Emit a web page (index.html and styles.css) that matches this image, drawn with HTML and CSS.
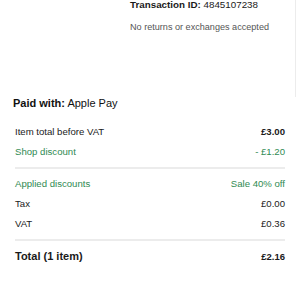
FILE: index.html
```html
<!DOCTYPE html>
<html lang="en">
<head>
  <meta charset="UTF-8" />
  <title>Order receipt</title>
  <link rel="stylesheet" href="styles.css">
</head>
<body>
  <div class="top">
    <div class="meta">
      <p class="txn"><strong>Transaction ID:</strong> 4845107238</p>
      <p class="note">No returns or exchanges accepted</p>
    </div>
  </div>

  <div class="summary">
    <h2 class="paid"><strong>Paid with:</strong> Apple Pay</h2>

    <div class="row"><span>Item total before VAT</span><strong>£3.00</strong></div>
    <div class="row green"><span>Shop discount</span><span>- £1.20</span></div>
    <hr class="rule">
    <div class="row green"><span>Applied discounts</span><span>Sale 40% off</span></div>
    <div class="row"><span>Tax</span><span>£0.00</span></div>
    <div class="row"><span>VAT</span><span>£0.36</span></div>
    <hr class="rule">
    <div class="row total"><span>Total (1 item)</span><span>£2.16</span></div>
  </div>
</body>
</html>
```

FILE: styles.css
```css
body {
  margin: 0;
  font-family: "Liberation Sans", Arial, sans-serif;
  color: #1a1a1a;
  background: #fff;
}
.top {
  width: 296px;
  height: 99px;
  margin-top: -2px;
  border-right: 1px solid #ececec;
  box-sizing: border-box;
}
.meta {
  padding-left: 130px;
}
.txn {
  margin: 0;
  font-size: 9.8px;
  line-height: 13px;
}
.note {
  margin: 10px 0 0;
  font-size: 9.1px;
  line-height: 12px;
  color: #555;
}
.summary {
  padding: 0 15px;
}
.paid {
  margin: 0 0 12px -2px;
  font-size: 11px;
  line-height: 12px;
  font-weight: normal;
  color: #111;
}
.row {
  display: flex;
  justify-content: space-between;
  align-items: center;
  height: 20px;
  font-size: 9.6px;
}
.green {
  color: #2f8a52;
}
.rule {
  border: none;
  height: 2px;
  background: #ececec;
  margin: 6px 0 4px;
}
.total {
  margin-top: 5px;
  font-weight: bold;
  font-size: 11px;
}
.total span:last-child {
  font-size: 9.5px;
}
```
